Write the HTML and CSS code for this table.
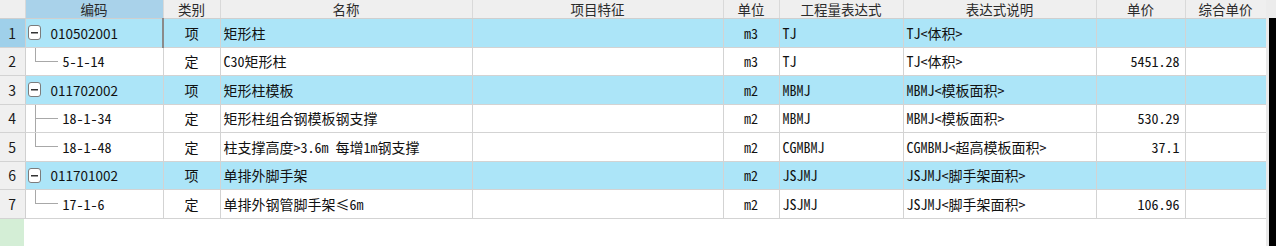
FILE: index.html
```html
<!DOCTYPE html>
<html lang="zh-CN">
<head>
<meta charset="utf-8">
<link rel="stylesheet" href="styles.css">
</head>
<body>
<div class="app">
  <div class="gridwrap">
    <table class="grid">
      <colgroup>
        <col class="c-num"><col class="c-code"><col class="c-type"><col class="c-name"><col class="c-feat"><col class="c-unit"><col class="c-expr"><col class="c-desc"><col class="c-price"><col class="c-total">
      </colgroup>
      <thead>
        <tr>
          <th class="h-num"></th>
          <th class="h-sel">编码</th>
          <th>类别</th>
          <th>名称</th>
          <th>项目特征</th>
          <th>单位</th>
          <th>工程量表达式</th>
          <th>表达式说明</th>
          <th>单价</th>
          <th>综合单价</th>
        </tr>
      </thead>
      <tbody>
        <tr class="parent first">
          <td class="num num-sel">1</td>
          <td class="code focus"><div class="tree"><span class="box"></span><span class="ptext">010502001</span></div></td>
          <td class="ctr">项</td>
          <td class="txt">矩形柱</td>
          <td></td>
          <td class="ctr">m3</td>
          <td class="txt">TJ</td>
          <td class="txt">TJ&lt;体积&gt;</td>
          <td></td>
          <td></td>
        </tr>
        <tr>
          <td class="num">2</td>
          <td class="code"><div class="tree"><span class="guide last"></span><span class="ctext">5-1-14</span></div></td>
          <td class="ctr">定</td>
          <td class="txt">C30矩形柱</td>
          <td></td>
          <td class="ctr">m3</td>
          <td class="txt">TJ</td>
          <td class="txt">TJ&lt;体积&gt;</td>
          <td class="rt">5451.28</td>
          <td></td>
        </tr>
        <tr class="parent">
          <td class="num">3</td>
          <td class="code"><div class="tree"><span class="box"></span><span class="ptext">011702002</span></div></td>
          <td class="ctr">项</td>
          <td class="txt">矩形柱模板</td>
          <td></td>
          <td class="ctr">m2</td>
          <td class="txt">MBMJ</td>
          <td class="txt">MBMJ&lt;模板面积&gt;</td>
          <td></td>
          <td></td>
        </tr>
        <tr>
          <td class="num">4</td>
          <td class="code"><div class="tree"><span class="guide mid"></span><span class="ctext">18-1-34</span></div></td>
          <td class="ctr">定</td>
          <td class="txt">矩形柱组合钢模板钢支撑</td>
          <td></td>
          <td class="ctr">m2</td>
          <td class="txt">MBMJ</td>
          <td class="txt">MBMJ&lt;模板面积&gt;</td>
          <td class="rt">530.29</td>
          <td></td>
        </tr>
        <tr>
          <td class="num">5</td>
          <td class="code"><div class="tree"><span class="guide last"></span><span class="ctext">18-1-48</span></div></td>
          <td class="ctr">定</td>
          <td class="txt">柱支撑高度&gt;3.6m 每增1m钢支撑</td>
          <td></td>
          <td class="ctr">m2</td>
          <td class="txt">CGMBMJ</td>
          <td class="txt">CGMBMJ&lt;超高模板面积&gt;</td>
          <td class="rt">37.1</td>
          <td></td>
        </tr>
        <tr class="parent">
          <td class="num">6</td>
          <td class="code"><div class="tree"><span class="box"></span><span class="ptext">011701002</span></div></td>
          <td class="ctr">项</td>
          <td class="txt">单排外脚手架</td>
          <td></td>
          <td class="ctr">m2</td>
          <td class="txt">JSJMJ</td>
          <td class="txt">JSJMJ&lt;脚手架面积&gt;</td>
          <td></td>
          <td></td>
        </tr>
        <tr>
          <td class="num">7</td>
          <td class="code"><div class="tree"><span class="guide last"></span><span class="ctext">17-1-6</span></div></td>
          <td class="ctr">定</td>
          <td class="txt">单排外钢管脚手架≤6m</td>
          <td></td>
          <td class="ctr">m2</td>
          <td class="txt">JSJMJ</td>
          <td class="txt">JSJMJ&lt;脚手架面积&gt;</td>
          <td class="rt">106.96</td>
          <td></td>
        </tr>
      </tbody>
    </table>
    <div class="filler"><div class="filler-strip"></div></div>
  </div>
  <div class="scrollbar">
    <div class="sb-head"></div>
    <div class="sb-body"><div class="sb-edge"></div><div class="sb-dark"></div></div>
  </div>
</div>
</body>
</html>
```

FILE: styles.css
```css
html, body {
  margin: 0;
  padding: 0;
  background: #ffffff;
}
body {
  width: 1276px;
  height: 246px;
  overflow: hidden;
  font-family: "Noto Sans Mono CJK SC", "Noto Sans CJK SC", monospace;
  font-size: 14px;
  color: #111;
}
.app {
  display: flex;
  width: 1276px;
  height: 246px;
}
.gridwrap {
  width: 1266px;
  display: flex;
  flex-direction: column;
}
.grid {
  width: 1266px;
  table-layout: fixed;
  border-collapse: collapse;
  border-spacing: 0;
}
.c-num { width: 25px; }
.c-code { width: 138px; }
.c-type { width: 57px; }
.c-name { width: 252px; }
.c-feat { width: 251px; }
.c-unit { width: 56px; }
.c-expr { width: 124px; }
.c-desc { width: 193px; }
.c-price { width: 89px; }
.c-total { width: 81px; }

.grid th {
  height: 18px;
  padding: 0;
  background: #efefef;
  color: #2b2b2b;
  font-family: "Noto Sans CJK SC", sans-serif;
  font-weight: normal;
  font-size: 13.5px;
  line-height: 17px;
  text-align: center;
  vertical-align: middle;
  border-right: 1px solid #d9d9d9;
  border-bottom: 1px solid #cfcfcf;
  white-space: nowrap;
}
.grid th.h-sel {
  background: #a9d2ea;
}
.grid td {
  height: 27.5px;
  padding: 0;
  border-right: 1px solid #d3d3d3;
  border-bottom: 1px solid #d3d3d3;
  white-space: nowrap;
  overflow: hidden;
  vertical-align: middle;
  line-height: 18px;
}
.grid tr.parent td {
  background: #ace5f8;
}
.grid td.num {
  background: #f0f0f0;
  text-align: center;
  font-family: "Noto Sans CJK SC", sans-serif;
  font-size: 14px;
  color: #1a1a1a;
  border-right: 1px solid #d0d0d0;
}
.grid tr.parent td.num {
  background: #f0f0f0;
}
.grid tr.parent td.num-sel {
  background: #9fd0ea;
}
.grid td.focus {
  border-right: 2px solid #8a8a8a;
}
.ctr {
  text-align: center;
}
.txt {
  padding-left: 3px !important;
}
.rt {
  text-align: right;
  padding-right: 5px !important;
}
.tree {
  display: flex;
  align-items: center;
  height: 27px;
}
.box {
  flex: none;
  width: 11px;
  height: 13px;
  margin-left: 2px;
  margin-right: 10px;
  border: 1px solid #7c7c7c;
  border-radius: 3px;
  background: #fff linear-gradient(#333, #333) center / 7px 1.5px no-repeat;
}
.ptext {
  font-family: "Noto Sans CJK SC", sans-serif;
  font-size: 13.5px;
}
.guide {
  flex: none;
  width: 37px;
  height: 100%;
  align-self: stretch;
}
.guide.last {
  background:
    linear-gradient(#a8a8a8, #a8a8a8) 9px 0 / 1px 50% no-repeat,
    linear-gradient(#a8a8a8, #a8a8a8) 9px 50% / 23px 1px no-repeat;
}
.guide.mid {
  background:
    linear-gradient(#a8a8a8, #a8a8a8) 9px 0 / 1px 100% no-repeat,
    linear-gradient(#a8a8a8, #a8a8a8) 9px 50% / 23px 1px no-repeat;
}
.ctext {
  font-size: 14px;
}
.filler {
  flex: 1;
  display: flex;
}
.filler-strip {
  width: 24px;
  background: #d4eed6;
}
.scrollbar {
  width: 10px;
  display: flex;
  flex-direction: column;
}
.sb-head {
  height: 18px;
  background: #ececec;
}
.sb-body {
  flex: 1;
  display: flex;
}
.sb-edge {
  width: 3px;
  background: #e9e9e9;
}
.sb-dark {
  flex: 1;
  background: #000;
}
```
